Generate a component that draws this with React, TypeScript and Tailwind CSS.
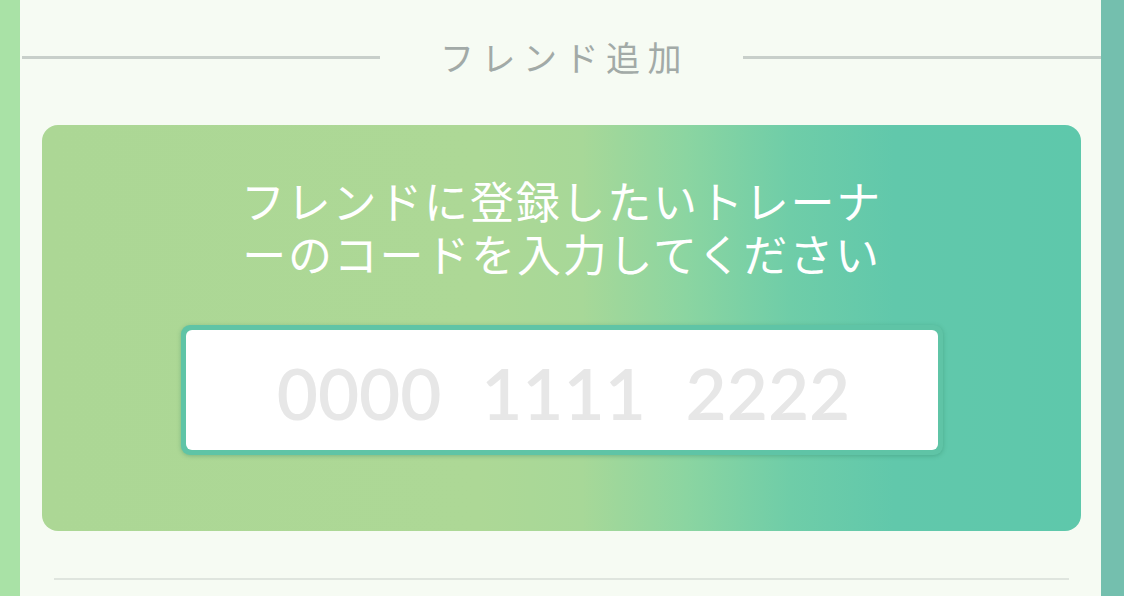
import React from "react";

export default function App() {
  return (
    <div
      className="flex h-[596px] w-[1124px] overflow-hidden bg-[#f6fbf3]"
      style={{ fontFamily: '"Noto Sans CJK JP", "Noto Sans", sans-serif' }}
    >
      <div className="w-[20px] shrink-0 bg-[#a9e2a6]" />
      <div className="flex flex-1 flex-col">
        <div className="flex h-[112px] items-center pt-[2px]">
          <div className="h-[3px] w-[358px] translate-x-[2px] bg-[#c8cfca]" />
          <div className="flex flex-1 justify-center">
            <span className="pl-[8px] text-[34px] leading-none tracking-[7.5px] text-[#a2aaa7]">
              フレンド追加
            </span>
          </div>
          <div className="h-[3px] w-[358px] bg-[#c8cfca]" />
        </div>
        <div className="px-[22px] pr-[20px] pt-[13px]">
          <div className="flex h-[406px] flex-col items-center rounded-[16px] bg-[linear-gradient(90deg,#acd795_0%,#add896_42%,#a7d898_52%,#8bd5a1_62%,#6fcda8_72%,#61c8ab_82%,#5ec8ab_100%)]">
            <p className="mt-[49px] text-center text-[44px] leading-[53px] tracking-[1.8px] text-white">
              フレンドに登録したいトレーナ
              <br />
              ーのコードを入力してください
            </p>
            <div className="mt-[45px] h-[130px] w-[762px] rounded-[9px] bg-[#5fc4a6] p-[5px] shadow-[0_1px_4px_rgba(40,120,90,0.35)]">
              <div className="flex h-full items-center justify-center rounded-[6px] bg-white">
                <span
                  className="translate-x-[2px] pt-[4px] text-[71px] font-semibold leading-none text-[#e7e7e7] [word-spacing:22px]"
                  style={{ fontFamily: 'Lato, "Open Sans", sans-serif' }}
                >
                  0000 1111 2222
                </span>
              </div>
            </div>
          </div>
        </div>
        <div className="ml-[34px] mr-[32px] mt-[47px] h-[2px] bg-[#dfe5de]" />
      </div>
      <div className="w-[23px] shrink-0 bg-[#74bfae]" />
    </div>
  );
}
